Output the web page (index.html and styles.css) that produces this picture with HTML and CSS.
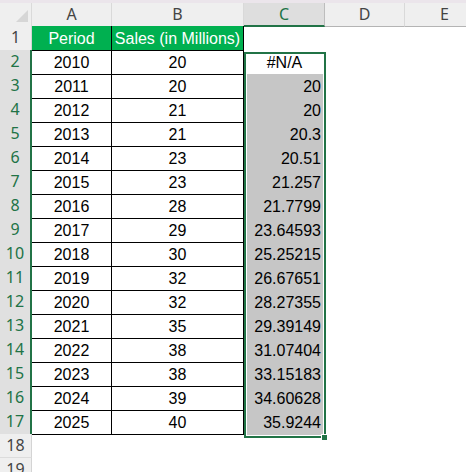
FILE: index.html
```html
<!DOCTYPE html>
<html>
<head>
<meta charset="utf-8">
<link rel="stylesheet" href="styles.css">
</head>
<body>
<div class="strip"></div>
<div class="sheet">
  <div class="row colhead">
    <div class="corner"><svg width="31" height="22" viewBox="0 0 31 22"><polygon points="16,19 28,19 28,7" fill="#d6d6d6"/></svg></div>
    <div class="ch">A</div>
    <div class="ch">B</div>
    <div class="ch sel">C</div>
    <div class="ch">D</div>
    <div class="ch">E</div>
  </div>
  <div class="row">
    <div class="rh">1</div>
    <div class="t h">Period</div>
    <div class="t h">Sales (in Millions)</div>
    <div class="e"></div><div class="e"></div><div class="e"></div>
  </div>
  <div class="row">
    <div class="rh sel">2</div>
    <div class="t">2010</div>
    <div class="t">20</div>
    <div class="cc act">#N/A</div><div class="e"></div><div class="e"></div>
  </div>
  <div class="row"><div class="rh sel">3</div><div class="t">2011</div><div class="t">20</div><div class="cc">20</div><div class="e"></div><div class="e"></div></div>
  <div class="row"><div class="rh sel">4</div><div class="t">2012</div><div class="t">21</div><div class="cc">20</div><div class="e"></div><div class="e"></div></div>
  <div class="row"><div class="rh sel">5</div><div class="t">2013</div><div class="t">21</div><div class="cc">20.3</div><div class="e"></div><div class="e"></div></div>
  <div class="row"><div class="rh sel">6</div><div class="t">2014</div><div class="t">23</div><div class="cc">20.51</div><div class="e"></div><div class="e"></div></div>
  <div class="row"><div class="rh sel">7</div><div class="t">2015</div><div class="t">23</div><div class="cc">21.257</div><div class="e"></div><div class="e"></div></div>
  <div class="row"><div class="rh sel">8</div><div class="t">2016</div><div class="t">28</div><div class="cc">21.7799</div><div class="e"></div><div class="e"></div></div>
  <div class="row"><div class="rh sel">9</div><div class="t">2017</div><div class="t">29</div><div class="cc">23.64593</div><div class="e"></div><div class="e"></div></div>
  <div class="row"><div class="rh sel">10</div><div class="t">2018</div><div class="t">30</div><div class="cc">25.25215</div><div class="e"></div><div class="e"></div></div>
  <div class="row"><div class="rh sel">11</div><div class="t">2019</div><div class="t">32</div><div class="cc">26.67651</div><div class="e"></div><div class="e"></div></div>
  <div class="row"><div class="rh sel">12</div><div class="t">2020</div><div class="t">32</div><div class="cc">28.27355</div><div class="e"></div><div class="e"></div></div>
  <div class="row"><div class="rh sel">13</div><div class="t">2021</div><div class="t">35</div><div class="cc">29.39149</div><div class="e"></div><div class="e"></div></div>
  <div class="row"><div class="rh sel">14</div><div class="t">2022</div><div class="t">38</div><div class="cc">31.07404</div><div class="e"></div><div class="e"></div></div>
  <div class="row"><div class="rh sel">15</div><div class="t">2023</div><div class="t">38</div><div class="cc">33.15183</div><div class="e"></div><div class="e"></div></div>
  <div class="row"><div class="rh sel">16</div><div class="t">2024</div><div class="t">39</div><div class="cc">34.60628</div><div class="e"></div><div class="e"></div></div>
  <div class="row"><div class="rh sel">17</div><div class="t">2025</div><div class="t">40</div><div class="cc">35.9244</div><div class="e"></div><div class="e"></div></div>
  <div class="row"><div class="rh">18</div><div class="e"></div><div class="e"></div><div class="e"></div><div class="e"></div><div class="e"></div></div>
  <div class="row"><div class="rh">19</div><div class="e"></div><div class="e"></div><div class="e"></div><div class="e"></div><div class="e"></div></div>
  <div class="selection"></div>
  <div class="handle"></div>
</div>
</body>
</html>
```
FILE: styles.css
```css
* { box-sizing: border-box; }
html, body {
  margin: 0;
  width: 466px;
  height: 472px;
  overflow: hidden;
  background: #fff;
  font-family: "Liberation Sans", Arial, sans-serif;
}
.strip {
  height: 3px;
  background: #ebe5eb;
}
.sheet {
  position: relative;
}
.row {
  display: grid;
  grid-template-columns: 32px 80px 132px 81px 80px 80px;
  height: 24px;
}
.colhead {
  height: 23px;
  background: #efefef;
}
.corner {
  background: #efefef;
  border-right: 1px solid #dadada;
  border-bottom: 1px solid #b4b4b4;
}
.corner svg { display: block; }
.ch {
  border-right: 1px solid #d9d9d9;
  border-bottom: 1px solid #b4b4b4;
  text-align: center;
  font-family: "Noto Sans", sans-serif;
  font-size: 16px;
  line-height: 22px;
  color: #444;
}
.ch.sel {
  background: #dedede;
  color: #217346;
  border-right-color: #bdbdbd;
  border-bottom: 2px solid #217346;
}
.rh {
  background: #efefef;
  border-right: 1px solid #d4d4d4;
  border-bottom: 1px solid #dcdcdc;
  text-align: center;
  font-family: "Noto Sans", sans-serif;
  font-size: 16px;
  line-height: 23px;
  color: #444;
}
.rh.sel {
  background: #e0e0e0;
  color: #217346;
  border-right: 2px solid #217346;
  border-bottom-color: #d2d2d2;
}
.t {
  border-right: 1px solid #000;
  border-bottom: 1px solid #000;
  text-align: center;
  font-size: 16px;
  line-height: 23px;
  padding-top: 1px;
  color: #000;
  white-space: nowrap;
}
.t.h {
  background: #00b050;
  color: #fff;
}
.cc {
  background: #c6c6c6;
  text-align: right;
  padding-right: 4px;
  font-size: 16px;
  line-height: 23px;
  padding-top: 1px;
  color: #000;
}
.cc.act {
  background: #fff;
  text-align: center;
  padding-right: 0;
}
.selection {
  position: absolute;
  left: 244px;
  top: 49px;
  width: 82px;
  height: 386px;
  border: 2px solid #217346;
  box-shadow: inset 0 0 0 1px #fff;
}
.handle {
  position: absolute;
  left: 321px;
  top: 431px;
  width: 7px;
  height: 7px;
  background: #217346;
  border: 1px solid #fff;
}
```
